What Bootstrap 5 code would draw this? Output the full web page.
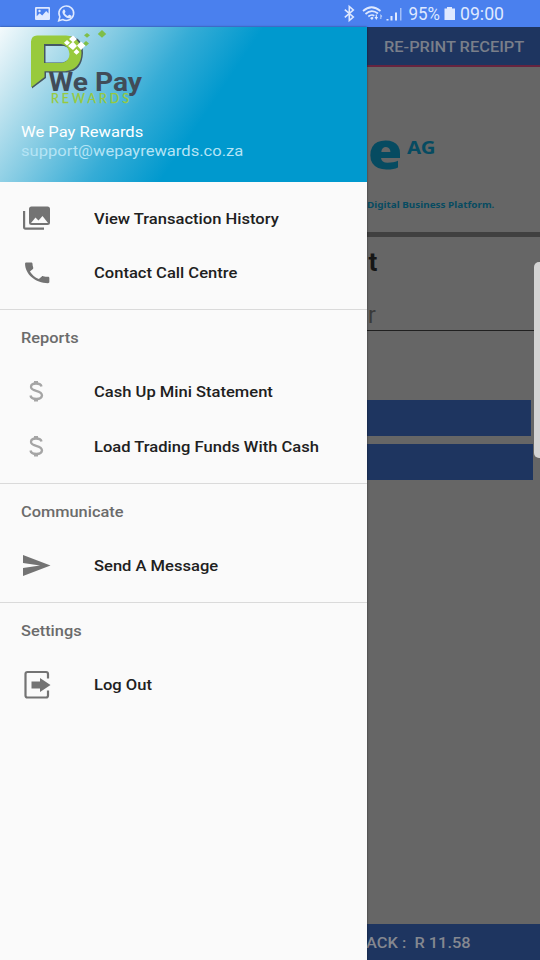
<!DOCTYPE html>
<html lang="en">
<head>
<meta charset="utf-8">
<meta name="viewport" content="width=device-width, initial-scale=1">
<title>We Pay Rewards</title>
<link href="https://cdn.jsdelivr.net/npm/bootstrap@5.3.0/dist/css/bootstrap.min.css" rel="stylesheet">
<style>
body{font-family:Roboto,"Liberation Sans",sans-serif;width:540px;height:960px;line-height:1.2;background:#666}
.statusbar{height:27px;background:#4a80ee;color:#dfe9ff;flex:none}
.statusbar svg{flex:none}
.drawer{width:367px;background:#fafafa;z-index:2;box-shadow:0 0 2px rgba(0,0,0,.5);flex:none}
.hero{height:154.5px;background:linear-gradient(124deg,#f4fafc 0,#c8e7f1 10%,#84cbe3 25%,#35acd6 41%,#0099ce 56%)}
.wide{display:inline-block;transform:scaleX(1.134);transform-origin:0 50%;white-space:nowrap}
.hero-name,.hero-mail{font-size:14.6px;height:19px;line-height:19px;padding:1px 0 0 21px}
.hero-name{color:#fff}
.hero-mail{color:#b5e4f5}
.entries{padding-top:10.5px}
.entry{height:54.5px;padding-left:21px}
.entry svg{width:30px;height:30px;flex:none;fill:#737373;margin-left:-.5px;margin-bottom:1px}
.entry .wide{margin-left:43px;font-size:14.6px;font-weight:500;color:#202020}
.group{border-top:1px solid #dadada;height:56.7px;padding:1.5px 0 0 21px;font-size:14.6px;font-weight:500;color:#6b6b6b}
.group .wide{transform:scaleX(1.122)}
.behind{background:#666;overflow:hidden}
.topbar{height:40px;background:#1e3560;border-bottom:2px solid #67243f;color:#7a7f8a;font-size:14.2px;font-weight:500;padding:4px 0 0 17px}
.topbar .wide{transform:scaleX(1.155)}
.brand-box{height:170px;border-bottom:5px solid #404040;color:#064b61;font-family:"Noto Sans","Open Sans",sans-serif;font-weight:700;padding-top:54px}
.brand-big{font-size:49px;font-weight:900;line-height:58px;padding-left:1px;width:36px;height:58px}
.brand-ag{font-size:17px;line-height:20px;padding-top:17px;margin-left:4px}
.brand-ag .wide{transform:scaleX(1.2)}
.tagline{font-size:9.1px;line-height:12px;margin-top:20px}
.tagline .wide{transform:scaleX(1.09)}
.title-end{font-size:26px;font-weight:700;line-height:30px;color:#161616;padding:10px 0 0 1.5px;height:53px}
.field{height:41px;border-bottom:1px solid #202020;color:#3a3a3a;font-size:23px;line-height:30px;padding:11px 0 0 1px;width:168px}
.action{height:36px;background:#1e3560}
.action-a{width:163.5px;margin-top:69px}
.action-b{width:166px;margin-top:8px}
.footbar{height:36px;background:#1e3560;color:#858890;font-size:15.2px;font-weight:500;padding-top:2px}
.footbar .wide{transform:scaleX(1.08);margin-left:-1px}
.edge{right:0;top:262px;width:6.5px;height:196px;background:#d4d4d4;border-radius:5px 0 0 5px;z-index:3}
</style>
<script src="https://cdn.jsdelivr.net/npm/bootstrap@5.3.0/dist/js/bootstrap.bundle.min.js"></script>
</head>
<body class="d-flex flex-column overflow-hidden position-relative m-0">
<header class="statusbar d-flex align-items-center">
  <svg width="540" height="27" viewBox="0 0 540 27" fill="#dfe9ff" font-family="Roboto,sans-serif">
    <path fill-rule="evenodd" d="M36 7h13q1 0 1 1v11q0 1-1 1H36q-1 0-1-1V8q0-1 1-1zm.7 1.700v7.600l3-3 2.500 2.200 4-4.500 2.300 2.600V8.700z"/><circle cx="39.500" cy="11" r="1.200"/>
    <path fill="none" stroke="#dfe9ff" stroke-width="1.500" d="M58.700 20.800l1.200-4A7.400 7.200 0 1 1 62.700 19.500z"/>
    <path d="M63.300 9.700q.8-.6 1.400.1l.8 2q0 .5-.9 1.400 1.300 2.200 3.200 2.900l1-1.200q.4-.4.9-.1l1.700.9q.5.300.2 1-.8 1.800-2.800 1.500-4.500-.8-6.300-5.300-.4-2 .8-3.200z"/>
    <path fill="none" stroke="#dfe9ff" stroke-width="1.600" d="M344.800 9.700l8.500 7.300-4 3.500V6.500l4 3.500-8.500 7.300"/>
    <g fill="none" stroke="#dfe9ff" stroke-width="1.700"><path d="M363 11q8.500-7.500 17.500 0M365.500 14q6-5.500 12.500-.500M368.300 16.500q3.300-2.500 6-.8"/></g>
    <path d="M370 18l2.300-1.200 1.300 1.200-1.600 2zM374.500 17h1.200v-2.500h1.200V17h1.200l-1.800 3zM379.500 18h1v-4l1.800 2.500h-1V19z"/>
    <path d="M386.500 19h2v1.500h-2zM390.500 16h2v4.500h-2zM395 12.500h2v8h-2z"/><path d="M400 8h1.500v12.500H400z" opacity=".6"/>
    <text x="408.500" y="20" font-size="18" textLength="31.500" lengthAdjust="spacingAndGlyphs">95%</text>
    <path d="M444.500 8.500h2.500V7h5v1.500h3V20h-10.500z"/>
    <text x="460" y="20" font-size="18" textLength="44" lengthAdjust="spacingAndGlyphs">09:00</text>
  </svg>
</header>
<div class="d-flex flex-grow-1">
  <nav class="drawer d-flex flex-column">
    <div class="hero d-flex flex-column">
      <svg width="160" height="95" viewBox="0 27 160 95">
        <path fill="#465764" fill-rule="evenodd" d="M38 36.500H70Q83 37 83 53 82 71 67 72.500H46V78L32 88.500V43zM45.500 46V62.500H63Q70.500 60 70.500 54 69.500 47 64 46z"/>
        <path fill="#98ca3c" fill-rule="evenodd" d="M37 35.500H66Q81 37 81.500 53 81 69.500 65 71.300H44.500V77L31 87.500V41.500Q31.500 35.500 37 35.500zM44 44V63H62Q69.500 61 69.500 54 68.500 45 61 44z"/>
        <path fill="#fff" d="M73 35.500l4 3.500-4 3.500-4-3.500zM67 40l3 2.800-3 2.700-3-2.700zM73 41.500l4 4.500-4 4-5-4zM81 41.500l4.500 4-4.500 4.500-4-4.500zM76.500 49l3 3-3 2.800-3-2.800z"/>
        <path fill="#7fbe48" d="M87 33l3 2.300-3 2.400-3-2.400zM102 30l4.200 4-4.200 3.700-4.200-3.700zM86 41l3 2.500-3 2.500-2.700-2.500z"/>
        <text x="48.500" y="91" font-family="Roboto" font-weight="700" font-size="25" fill="#414c58" textLength="93.500" lengthAdjust="spacingAndGlyphs">We Pay</text>
        <text x="51" y="103" font-family="Lato" font-size="12.500" fill="#98ca3c" stroke="#98ca3c" stroke-width=".25" textLength="78">REWARDS</text>
      </svg>
      <div class="hero-name"><span class="wide">We Pay Rewards</span></div>
      <div class="hero-mail"><span class="wide">support@wepayrewards.co.za</span></div>
    </div>
    <div class="entries d-flex flex-column pb-2">
      <a class="entry d-flex align-items-center text-decoration-none" href="#">
        <svg viewBox="0 0 30 30"><path fill-rule="evenodd" d="M10.500 2.500H26.500Q29 2.500 29 5V18.500Q29 21 26.500 21H10.500Q8 21 8 18.500V5Q8 2.500 10.500 2.500zM10 19H27L21.500 12 17.500 16.500 14.500 13.500z"/><path d="M2 7H4.200V23.500H23V25.700H4.500Q2 25.700 2 23z"/></svg>
        <span class="wide">View Transaction History</span></a>
      <a class="entry d-flex align-items-center text-decoration-none" href="#">
        <svg viewBox="0 0 30 30"><path transform="translate(0 1) scale(1.350 1.150)" d="M6.620 10.790c1.440 2.830 3.760 5.140 6.590 6.590l2.200-2.200c.27-.27.670-.360 1.020-.24 1.120.37 2.330.57 3.570.57.550 0 1 .450 1 1V20c0 .550-.450 1-1 1-9.390 0-17-7.610-17-17 0-.550.450-1 1-1h3.500c.550 0 1 .450 1 1 0 1.250.2 2.450.570 3.570.110.350.030.740-.250 1.020l-2.200 2.200z"/></svg>
        <span class="wide">Contact Call Centre</span></a>
    </div>
    <div class="group d-flex align-items-center"><span class="wide">Reports</span></div>
    <div class="d-flex flex-column pb-2">
      <a class="entry d-flex align-items-center text-decoration-none" href="#">
        <svg viewBox="0 0 30 30"><path fill="none" stroke="#a5a5a5" stroke-width="2.300" d="M20.500 9.500Q20 6.500 15 6.500 10 6.500 10 10C10 15 21 12.500 21 18.500Q20.500 22 15.500 22 10 22 9.500 18.500"/><path fill="#a5a5a5" d="M13 4h4v3h-4zM13 21.500h4v3h-4z"/></svg>
        <span class="wide">Cash Up Mini Statement</span></a>
      <a class="entry d-flex align-items-center text-decoration-none" href="#">
        <svg viewBox="0 0 30 30"><path fill="none" stroke="#a5a5a5" stroke-width="2.300" d="M20.500 9.500Q20 6.500 15 6.500 10 6.500 10 10C10 15 21 12.500 21 18.500Q20.500 22 15.500 22 10 22 9.500 18.500"/><path fill="#a5a5a5" d="M13 4h4v3h-4zM13 21.500h4v3h-4z"/></svg>
        <span class="wide">Load Trading Funds With Cash</span></a>
    </div>
    <div class="group d-flex align-items-center"><span class="wide">Communicate</span></div>
    <div class="d-flex flex-column pb-2">
      <a class="entry d-flex align-items-center text-decoration-none" href="#">
        <svg viewBox="0 0 30 30"><path d="M2 4L29.500 14.500 2 25V17L19 14.500 2 12z"/></svg>
        <span class="wide">Send A Message</span></a>
    </div>
    <div class="group d-flex align-items-center"><span class="wide">Settings</span></div>
    <div class="d-flex flex-column">
      <a class="entry d-flex align-items-center text-decoration-none" href="#">
        <svg viewBox="0 0 30 30"><path fill="none" stroke="#737373" stroke-width="2.200" d="M27 8.500V4Q27 2 25 2H6.500Q4.500 2 4.500 4V25.500Q4.500 27.500 6.500 27.500H25Q27 27.500 27 25.500V20.500"/><path d="M10.500 11.500H19V8L29.500 15 19 22V18.500H10.500z"/></svg>
        <span class="wide">Log Out</span></a>
    </div>
  </nav>
  <main class="behind d-flex flex-column flex-grow-1">
    <div class="topbar d-flex align-items-center"><span class="wide">RE-PRINT RECEIPT</span></div>
    <div class="brand-box">
      <div class="d-flex"><div class="brand-big"><span class="wide">e</span></div><div class="brand-ag"><span class="wide">AG</span></div></div>
      <div class="tagline"><span class="wide">Digital Business Platform.</span></div>
    </div>
    <div class="title-end">t</div>
    <div class="field">r</div>
    <div class="action action-a"></div>
    <div class="action action-b"></div>
    <div class="footbar mt-auto d-flex align-items-center"><span class="wide">ACK :&nbsp; R 11.58</span></div>
  </main>
</div>
<div class="edge position-absolute"></div>
</body>
</html>
